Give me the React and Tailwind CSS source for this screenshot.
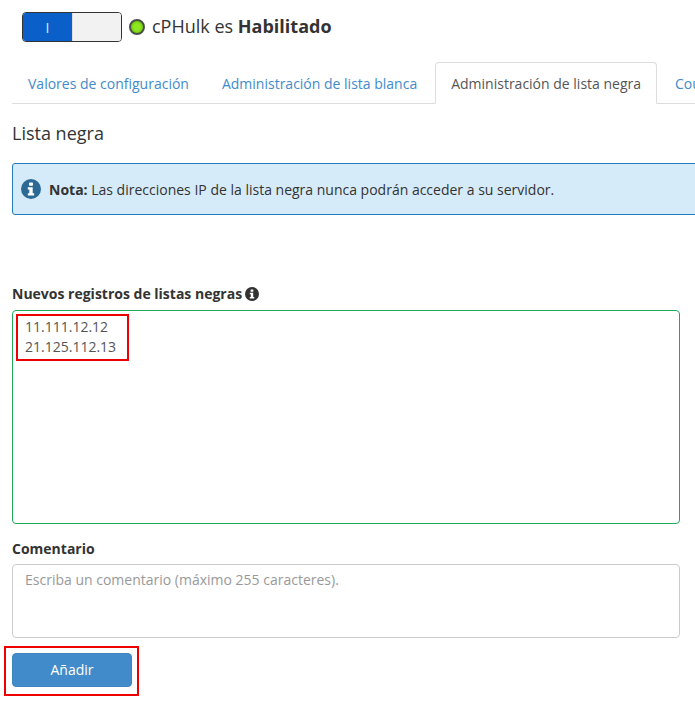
import React from "react";

function InfoIcon({ className }) {
  return (
    <svg viewBox="0 0 20 20" className={className}>
      <circle cx="10" cy="10" r="10" fill="currentColor" />
      <rect x="8" y="3.5" width="4" height="3.2" rx="0.8" fill="#fff" />
      <path d="M6.8 8.2h4.9v6h1.5v2.3H6.8v-2.3h1.5v-3.7H6.8z" fill="#fff" />
    </svg>
  );
}

export default function App() {
  return (
    <div className="relative w-[695px] h-[708px] overflow-hidden bg-white text-[14px] text-[#333] font-['Open_Sans',sans-serif]">
      <div className="flex items-center pt-3 pl-[22px] h-[42px]">
        <div className="flex w-[100px] h-[30px] rounded-[4px] border border-[#333] overflow-hidden">
          <div className="w-[49px] bg-[#0b5fc9] text-[#d8ebff] text-[14px] flex items-center justify-center">I</div>
          <div className="flex-1 bg-[#f2f2f2] border-l border-[#ddd]"></div>
        </div>
        <div className="ml-[7px] w-4 h-4 rounded-full border-2 border-[#4a5048] bg-[radial-gradient(circle,#8fe81f_35%,#5cb800_100%)]"></div>
        <div className="ml-[7px] -mt-[2px] text-[18px] leading-[24px] text-[#333]">
          cPHulk es <b className="font-bold">Habilitado</b>
        </div>
      </div>

      <div className="mt-5 ml-3 w-[683px] h-[42px] flex border-b border-[#ddd] whitespace-nowrap">
        <div className="pl-4 pr-[17px] pt-[11px] text-[#428bca]">Valores de configuración</div>
        <div className="pl-4 pr-[18px] pt-[11px] text-[#428bca]">Administración de lista blanca</div>
        <div className="px-[15px] pt-[10px] h-[42px] bg-white border border-[#ddd] border-b-white rounded-t-[4px] text-[#555]">
          Administración de lista negra
        </div>
        <div className="pl-[18px] pt-[11px] text-[#428bca]">Countries</div>
      </div>

      <h2 className="ml-3 mt-[17px] text-[18px] leading-[24px] font-normal text-[#333]">Lista negra</h2>

      <div className="ml-3 mt-[18px] w-[720px] h-[52px] flex items-center pl-2 bg-[#d6ebf9] border border-[#237dbb] rounded-[3px]">
        <InfoIcon className="w-5 h-5 text-[#2b6a94] shrink-0" />
        <div className="ml-2"><b className="font-bold">Nota:</b> Las direcciones IP de la lista negra nunca podrán acceder a su servidor.</div>
      </div>

      <div className="ml-3 mt-[69px] h-[20px] flex items-center font-bold leading-[20px]">
        Nuevos registros de listas negras
        <InfoIcon className="ml-[3px] w-[14px] h-[14px] text-[#333]" />
      </div>
      <div className="ml-3 mt-[6px] w-[668px] h-[214px] border border-[#1fa85c] rounded-[4px] px-3 pt-[6px] leading-[20px] text-[#555]">
        <div>11.111.12.12</div>
        <div>21.125.112.13</div>
      </div>

      <div className="ml-3 mt-[15px] h-[20px] font-bold leading-[20px]">Comentario</div>
      <div className="ml-3 mt-[5px] w-[668px] h-[74px] border border-[#ccc] rounded-[4px] px-3 pt-[5px] leading-[20px] text-[#999]">
        Escriba un comentario (máximo 255 caracteres).
      </div>

      <div className="ml-3 mt-[15px] w-[120px] h-[34px] flex items-center justify-center pb-[2px] bg-[#428bca] border border-[#3f85c2] rounded-[4px] text-white">
        Añadir
      </div>

      <div className="absolute left-[16px] top-[314px] w-[113px] h-[47px] border-2 border-[#ee0000]"></div>
      <div className="absolute left-[4px] top-[646px] w-[135px] h-[50px] border-2 border-[#ee0000]"></div>
    </div>
  );
}
